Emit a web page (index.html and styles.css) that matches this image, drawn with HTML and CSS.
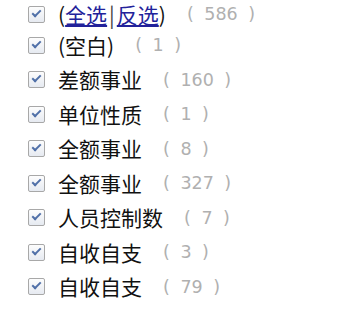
FILE: index.html
```html
<!DOCTYPE html>
<html>
<head>
<meta charset="utf-8">
<title>筛选</title>
<link rel="stylesheet" href="styles.css">
</head>
<body>
<div class="list">
    <div class="row first"><span class="box"></span><span class="label">(<a href="#">全选</a><span class="sep">|</span><a href="#">反选</a>)</span><span class="count">( 586 )</span></div>
    <div class="row"><span class="box"></span><span class="label">(空白)</span><span class="count">( 1 )</span></div>
    <div class="row"><span class="box"></span><span class="label">差额事业</span><span class="count">( 160 )</span></div>
    <div class="row"><span class="box"></span><span class="label">单位性质</span><span class="count">( 1 )</span></div>
    <div class="row"><span class="box"></span><span class="label">全额事业</span><span class="count">( 8 )</span></div>
    <div class="row"><span class="box"></span><span class="label">全额事业</span><span class="count">( 327 )</span></div>
    <div class="row"><span class="box"></span><span class="label">人员控制数</span><span class="count">( 7 )</span></div>
    <div class="row"><span class="box"></span><span class="label">自收自支</span><span class="count">( 3 )</span></div>
    <div class="row"><span class="box"></span><span class="label">自收自支</span><span class="count">( 79 )</span></div>
</div>
</body>
</html>
```
FILE: styles.css
```css
body{
    margin: 0;
    background: #fff;
    font-family: "Noto Sans CJK SC", "DejaVu Sans", sans-serif;
}
.list{
    padding-left: 28px;
}
.row{
    display: flex;
    align-items: center;
    height: 34.5px;
}
.row.first{
    height: 28px;
}
.box{
    position: relative;
    box-sizing: border-box;
    width: 17px;
    height: 17px;
    border: 1px solid #a8a8a8;
    border-radius: 2px;
    background: linear-gradient(#fdfdfd, #e6eaf1);
    flex: none;
}
.box::after{
    content: "";
    position: absolute;
    left: 3px;
    top: 3px;
    width: 7px;
    height: 3px;
    border-left: 2.5px solid #5070a8;
    border-bottom: 2.5px solid #5070a8;
    transform: rotate(-45deg);
}
.label{
    margin-left: 13px;
    font-size: 21px;
    color: #111;
    line-height: 1;
}
.label a{
    color: #22229a;
    text-decoration: underline;
}
.sep{
    color: #444;
    margin: 0 2px;
}
.count{
    margin-left: 21px;
    font-family: "DejaVu Sans", sans-serif;
    font-size: 17.5px;
    color: #b0b0b0;
    white-space: pre;
    word-spacing: 5px;
}
```
